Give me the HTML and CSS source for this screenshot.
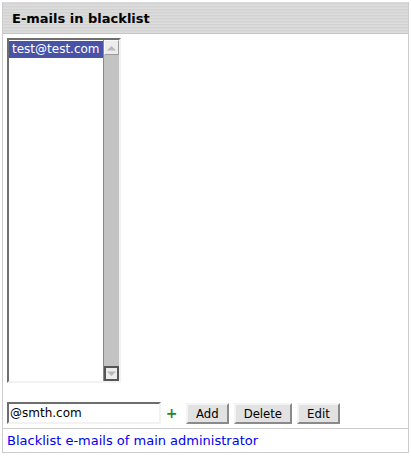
FILE: index.html
```html
<!DOCTYPE html>
<html lang="en">

<head>
    <meta charset="UTF-8">
    <title>Blacklist</title>
    <link rel="stylesheet" href="styles.css">
</head>

<body>
    <div class="panel">
        <h2 class="panel-title">E-mails in blacklist</h2>
        <div class="panel-body">
            <div class="listbox">
                <div class="listbox-items">
                    <div class="item selected">test@test.com</div>
                </div>
                <div class="scrollbar">
                    <span class="arrow up">
                        <svg width="9" height="6" viewBox="0 0 9 6"><path d="M0 5.5 L4.5 1 L9 5.5 Z" fill="#b8b8b8"/></svg>
                    </span>
                    <span class="track"></span>
                    <span class="arrow down">
                        <svg width="9" height="6" viewBox="0 0 9 6"><path d="M0 0.5 L4.5 5 L9 0.5 Z" fill="#b8b8b8"/></svg>
                    </span>
                </div>
            </div>
            <div class="add-row">
                <input type="text" class="email-input" value="@smth.com">
                <span class="plus">+</span>
                <button class="btn">Add</button>
                <button class="btn">Delete</button>
                <button class="btn">Edit</button>
            </div>
        </div>
        <div class="panel-footer">
            <a href="#" class="footer-link">Blacklist e-mails of main administrator</a>
        </div>
    </div>
</body>

</html>
```

FILE: styles.css
```css
body {
    margin: 0;
    padding: 2px;
    font-family: 'DejaVu Sans', sans-serif;
    font-size: 13px;
    background: #fff;
}

.panel {
    width: 405px;
    border: 1px solid #cccccc;
    border-top: none;
}

.panel-title {
    margin: 0;
    height: 31px;
    line-height: 33px;
    padding-left: 9px;
    font-size: 13px;
    font-weight: bold;
    color: #000;
    border-bottom: 1px solid #c4c4c4;
    background: repeating-linear-gradient(to bottom, #dcdcdc 0px, #dcdcdc 1px, #d2d2d2 1px, #d2d2d2 2px, #d8d8d8 2px, #d8d8d8 3px);
}

.panel-body {
    padding: 4px;
}

.listbox {
    display: flex;
    width: 110px;
    height: 341px;
    border: 2px solid;
    border-color: #6e6e6e #f2f2f2 #f2f2f2 #6e6e6e;
}

.listbox-items {
    flex: 1;
    background: #fff;
    padding-top: 1px;
}

.item {
    font-size: 12px;
    height: 17px;
    line-height: 17px;
    padding-left: 3px;
    color: #000;
}

.item.selected {
    background: #4852a6;
    color: #fff;
}

.scrollbar {
    width: 15px;
    display: flex;
    flex-direction: column;
    background: #c3c3c3;
    border-left: 1px solid #8a8a8a;
}

.arrow {
    height: 13px;
    display: flex;
    align-items: center;
    justify-content: center;
    background: #ececec;
    border: 1px solid;
}

.arrow.up {
    border-color: #f8f8f8 #9a9a9a #9a9a9a #f8f8f8;
}

.arrow.down {
    border: 2px solid #555;
    height: 11px;
}

.track {
    flex: 1;
}

.add-row {
    display: flex;
    align-items: center;
    margin-top: 19px;
    height: 22px;
}

.email-input {
    box-sizing: border-box;
    width: 154px;
    height: 22px;
    margin: 0;
    padding: 0 1px;
    font-family: 'DejaVu Sans', sans-serif;
    font-size: 12px;
    color: #000;
    border: 2px solid;
    border-color: #6e6e6e #f2f2f2 #f2f2f2 #6e6e6e;
    outline: none;
}

.plus {
    width: 21px;
    margin-right: 4px;
    text-align: center;
    color: #1f8a2e;
    font-weight: bold;
    font-size: 14px;
}

.btn {
    box-sizing: border-box;
    height: 21px;
    margin: 0 5px 0 0;
    padding: 0 8px;
    font-family: 'DejaVu Sans Condensed', 'DejaVu Sans', sans-serif;
    font-size: 13px;
    color: #000;
    background: #e2e2e2;
    border: 2px solid;
    border-color: #f4f4f4 #8a8a8a #8a8a8a #f4f4f4;
    border-radius: 0;
}

.panel-footer {
    border-top: 1px solid #cccccc;
    height: 23px;
    line-height: 23px;
    padding-left: 4px;
}

.footer-link {
    color: #0000ee;
    text-decoration: none;
    font-size: 13px;
}
```
